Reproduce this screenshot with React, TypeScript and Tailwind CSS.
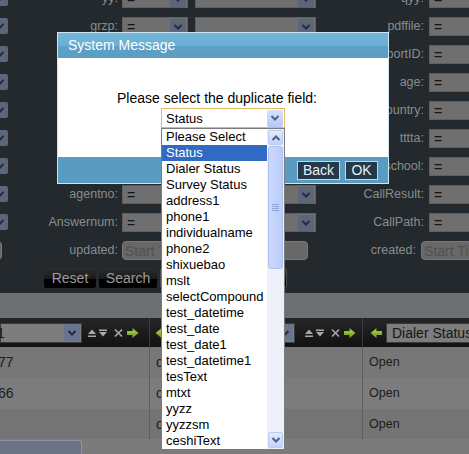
import React from 'react';

const FORM_ROWS = [
  { left: 'yy:', right: 'qyy:' },
  { left: 'grzp:', right: 'pdffile:' },
  { left: 'name:', right: 'reportID:' },
  { left: 'sex:', right: 'age:' },
  { left: 'city:', right: 'country:' },
  { left: 'email:', right: 'tttta:' },
  { left: 'mobile:', right: 'school:' },
  { left: 'agentno:', right: 'CallResult:' },
  { left: 'Answernum:', right: 'CallPath:' },
  { left: 'updated:', right: 'created:', date: true },
];

const FIELDS = [
  'Please Select', 'Status', 'Dialer Status', 'Survey Status', 'address1', 'phone1',
  'individualname', 'phone2', 'shixuebao', 'mslt', 'selectCompound', 'test_datetime',
  'test_date', 'test_date1', 'test_datetime1', 'tesText', 'mtxt', 'yyzz', 'yyzzsm', 'ceshiText',
];

function Chevron({ up = false, color = '#1f2c46' }: { up?: boolean; color?: string }) {
  return (
    <svg width="10" height="8" viewBox="0 0 10 8">
      <path d={up ? 'M1.5 6 L5 2.5 L8.5 6' : 'M1.5 2 L5 5.5 L8.5 2'} fill="none" stroke={color} strokeWidth="2" />
    </svg>
  );
}

// dimmed dropdown button of the background form
function DimArrow() {
  return (
    <div className="flex h-[16px] w-[16px] shrink-0 items-center justify-center rounded-[2px] bg-[#5d6679]">
      <Chevron />
    </div>
  );
}

function DimSelect({ w, value = '', arrow = true }: { w: string; value?: string; arrow?: boolean }) {
  return (
    <div className={`flex h-[19px] ${w} shrink-0 items-center justify-between border border-[#5f5f5f] bg-[#6f6f6f] pl-[4px] pr-[1px]`}>
      <span className="text-[14px] leading-none text-[#141414]">{value}</span>
      {arrow && <DimArrow />}
    </div>
  );
}

function DateInput({ w }: { w: string }) {
  return (
    <div className={`flex h-[19px] ${w} shrink-0 items-center overflow-hidden rounded-[4px] border border-[#777] bg-[#686868] pl-[2px]`}>
      <span className="whitespace-nowrap text-[14px] leading-none text-[#505050]">Start Time</span>
    </div>
  );
}

function FilterForm() {
  return (
    <div className="h-[293px] overflow-hidden">
      <div className="-mt-[11px] flex flex-col gap-[9px]">
        {FORM_ROWS.map((row) => (
          <div key={row.left} className="flex h-[19px] items-center text-[12.5px] text-[#898d90]">
            <div className="h-[19px] w-[8px] shrink-0 overflow-hidden">
              {row.date ? (
                <div className="-ml-[20px] h-[19px] w-[22px] rounded-[4px] border border-[#777] bg-[#686868]" />
              ) : (
                <div className="-ml-[8px] pt-[1px]"><DimArrow /></div>
              )}
            </div>
            <div className="w-[110px] shrink-0 text-right">{row.left}</div>
            <div className="ml-[4px] flex">
              {row.date ? (
                <DateInput w="w-[186px]" />
              ) : (
                <>
                  <DimSelect w="w-[66px]" value="=" />
                  <div className="ml-[7px]"><DimSelect w="w-[121px]" /></div>
                </>
              )}
            </div>
            <div className="w-[108px] shrink-0 text-right">{row.right}</div>
            <div className="ml-[5px] flex-1">
              {row.date ? <DateInput w="w-[80px]" /> : <DimSelect w="w-[80px]" value="=" arrow={false} />}
            </div>
          </div>
        ))}
      </div>
      <div className="mt-[8px] flex gap-[3px] pl-[44px]">
        {['Reset', 'Search', 'Duplicate'].map((b, i) => (
          <button
            key={b}
            className={`h-[20px] ${i === 0 ? 'w-[52px]' : i === 1 ? 'w-[58px]' : 'w-[127px] border border-[#4d4d4d]'} rounded-[2px] bg-[linear-gradient(#2c2c2c_0%,#1a1a1a_55%,#000_56%,#000_100%)] text-[14px] leading-none text-[#9b9b9b]`}
          >
            {b}
          </button>
        ))}
      </div>
    </div>
  );
}

function SortIcons() {
  return (
    <div className="flex items-center gap-[1px]">
      <svg width="10" height="10" viewBox="0 0 10 10">
        <polygon points="1,6 5,1.5 9,6" fill="#a9a9a9" />
        <rect x="1" y="7.5" width="8" height="1.5" fill="#a9a9a9" />
      </svg>
      <svg width="10" height="10" viewBox="0 0 10 10">
        <rect x="1" y="1.5" width="8" height="1.5" fill="#a9a9a9" />
        <polygon points="1,4 9,4 5,8.5" fill="#a9a9a9" />
      </svg>
      <svg width="12" height="10" viewBox="0 0 12 10" className="ml-[4px]">
        <path d="M2 1.5 L9 8.5 M9 1.5 L2 8.5" stroke="#a9a9a9" strokeWidth="1.6" />
      </svg>
      <GreenArrow />
    </div>
  );
}

function GreenArrow({ left = false }: { left?: boolean }) {
  return (
    <svg width="14" height="12" viewBox="0 0 14 12" className={left ? '-scale-x-100' : ''}>
      <path d="M1 4 H6.5 V1 L12.5 6 L6.5 11 V8 H1 Z" fill="#86ad33" />
      <path d="M1.5 4.5 H7 V2.2 L11.5 6 H1.5 Z" fill="#9dc545" />
    </svg>
  );
}

function HeaderSelect({ w, value, textClass = '' }: { w: string; value: string; textClass?: string }) {
  return (
    <div className={`flex h-[20px] ${w} shrink-0 items-center justify-between border border-[#3b3b3b] bg-[#7d7d7d] pr-[1px]`}>
      <span className={`text-[14px] leading-none text-[#151515] ${textClass}`}>{value}</span>
      <div className="flex h-[17px] w-[16px] items-center justify-center rounded-[2px] bg-[#697490]">
        <Chevron />
      </div>
    </div>
  );
}

const ROWS = [
  { a: '77', b: 'cs', c: 'Open', bg: 'bg-[#777777]' },
  { a: '66', b: 'cs', c: 'Open', bg: 'bg-[#7c7c7c]' },
  { a: '', b: 'cs', c: 'Open', bg: 'bg-[#747474]' },
];

function ResultTable() {
  return (
    <div>
      <div className="h-[25px] bg-[#6c7073]" />
      <div className="flex h-[29px] bg-[linear-gradient(#262626,#121212)]">
        <div className="flex w-[150px] shrink-0 items-center gap-[5px] border-r border-[#3c3c3c]">
          <HeaderSelect w="w-[82px]" value="1" textClass="-ml-[4px]" />
          <SortIcons />
        </div>
        <div className="flex w-[213px] shrink-0 items-center border-r border-[#3c3c3c] pl-[4px]">
          <GreenArrow left />
          <div className="ml-[2px]"><HeaderSelect w="w-[125px]" value="cs" textClass="pl-[4px]" /></div>
          <div className="ml-[9px]"><SortIcons /></div>
        </div>
        <div className="flex flex-1 items-center pl-[6px]">
          <GreenArrow left />
          <div className="ml-[3px] flex h-[20px] flex-1 items-center border border-[#3b3b3b] bg-[#7d7d7d] pl-[5px]">
            <span className="whitespace-nowrap text-[14px] leading-none text-[#151515]">Dialer Status</span>
          </div>
        </div>
      </div>
      {ROWS.map((r, i) => (
        <div key={i} className={`flex ${i === 2 ? 'h-[30px]' : 'h-[31px]'} ${r.bg} text-[#1b1b1b]`}>
          <div className="flex w-[150px] shrink-0 items-center border-r border-[#5e5e5e] text-[14px]">
            <span className="-ml-[2px]">{r.a}</span>
          </div>
          <div className="flex w-[213px] shrink-0 items-center border-r border-[#5e5e5e] pl-[6px] text-[14px]">{r.b}</div>
          <div className="flex flex-1 items-center pl-[6px] text-[12.5px]">{r.c}</div>
        </div>
      ))}
      <div className="h-[15px] bg-[#7b7b7b] pt-[1px]">
        <div className="h-[14px] w-[82px] rounded-tr-[3px] border-t border-r border-[#8b93a4] bg-[#6a7284]" />
      </div>
    </div>
  );
}

function FieldList() {
  return (
    <div className="absolute left-0 top-full z-10 flex h-[322px] w-[124px] border border-[#7b7b7b] bg-white">
      <div className="flex-1">
        {FIELDS.map((f) => (
          <div
            key={f}
            className={`h-[16px] whitespace-nowrap pl-[4px] text-[13px] leading-[16px] ${f === 'Status' ? 'bg-[#316ac5] text-white' : 'text-black'}`}
          >
            {f}
          </div>
        ))}
      </div>
      <div className="flex w-[17px] flex-col bg-[#eef0f8] px-[1px] py-[1px]">
        <div className="flex h-[15px] items-center justify-center rounded-[2px] border border-[#bccdf5] bg-[linear-gradient(#e2eafd,#c1d2fa)]">
          <Chevron up color="#4d6185" />
        </div>
        <div className="mt-[1px] flex h-[123px] items-center justify-center rounded-[3px] border border-[#aec1ef] bg-[linear-gradient(90deg,#cbd8fc,#bccdf8)]">
          <div className="flex flex-col gap-[1px]">
            {[0, 1, 2, 3].map((k) => (
              <div key={k} className="h-[1px] w-[7px] bg-[#8ea5dc]" />
            ))}
          </div>
        </div>
        <div className="flex-1" />
        <div className="flex h-[16px] items-center justify-center rounded-[2px] border border-[#bccdf5] bg-[linear-gradient(#e2eafd,#c1d2fa)]">
          <Chevron color="#4d6185" />
        </div>
      </div>
    </div>
  );
}

function SystemMessage() {
  return (
    <div className="absolute left-[57px] top-[32px] flex h-[152px] w-[332px] flex-col border border-[#cde5f2] bg-white">
      <div className="flex h-[25px] items-center bg-[linear-gradient(#72b6d9_0%,#6aafd4_52%,#5ea0c6_53%,#5b9cc2_100%)] pl-[10px] text-[14px] text-white">
        System Message
      </div>
      <div className="flex h-[99px] flex-col items-center pt-[31px]">
        <div className="pr-[12px] text-[14px] leading-[18px] text-black">Please select the duplicate field:</div>
        <div className="relative mt-[1px]">
          <div className="flex h-[20px] w-[124px] items-center justify-between border border-[#e2b765] bg-white pl-[4px] pr-[1px]">
            <span className="text-[13px] leading-none text-black">Status</span>
            <div className="flex h-[17px] w-[16px] items-center justify-center rounded-[2px] bg-[linear-gradient(#d7e2fd,#b5c9f7)]">
              <Chevron color="#4d6185" />
            </div>
          </div>
          <FieldList />
        </div>
      </div>
      <div className="flex flex-1 items-center justify-end gap-[5px] bg-[#5a9cc1] pr-[10px]">
        <button className="h-[19px] w-[43px] border border-[#bcdaec] bg-[#24394a] text-[14px] leading-none text-[#e8f0f6]">Back</button>
        <button className="h-[19px] w-[33px] border border-[#bcdaec] bg-[#24394a] text-[14px] leading-none text-[#e8f0f6]">OK</button>
      </div>
    </div>
  );
}

export default function App() {
  return (
    <div className="relative h-[454px] w-[469px] overflow-hidden bg-[#23292c] font-['Liberation_Sans',Arial,sans-serif]">
      <FilterForm />
      <ResultTable />
      <SystemMessage />
    </div>
  );
}
